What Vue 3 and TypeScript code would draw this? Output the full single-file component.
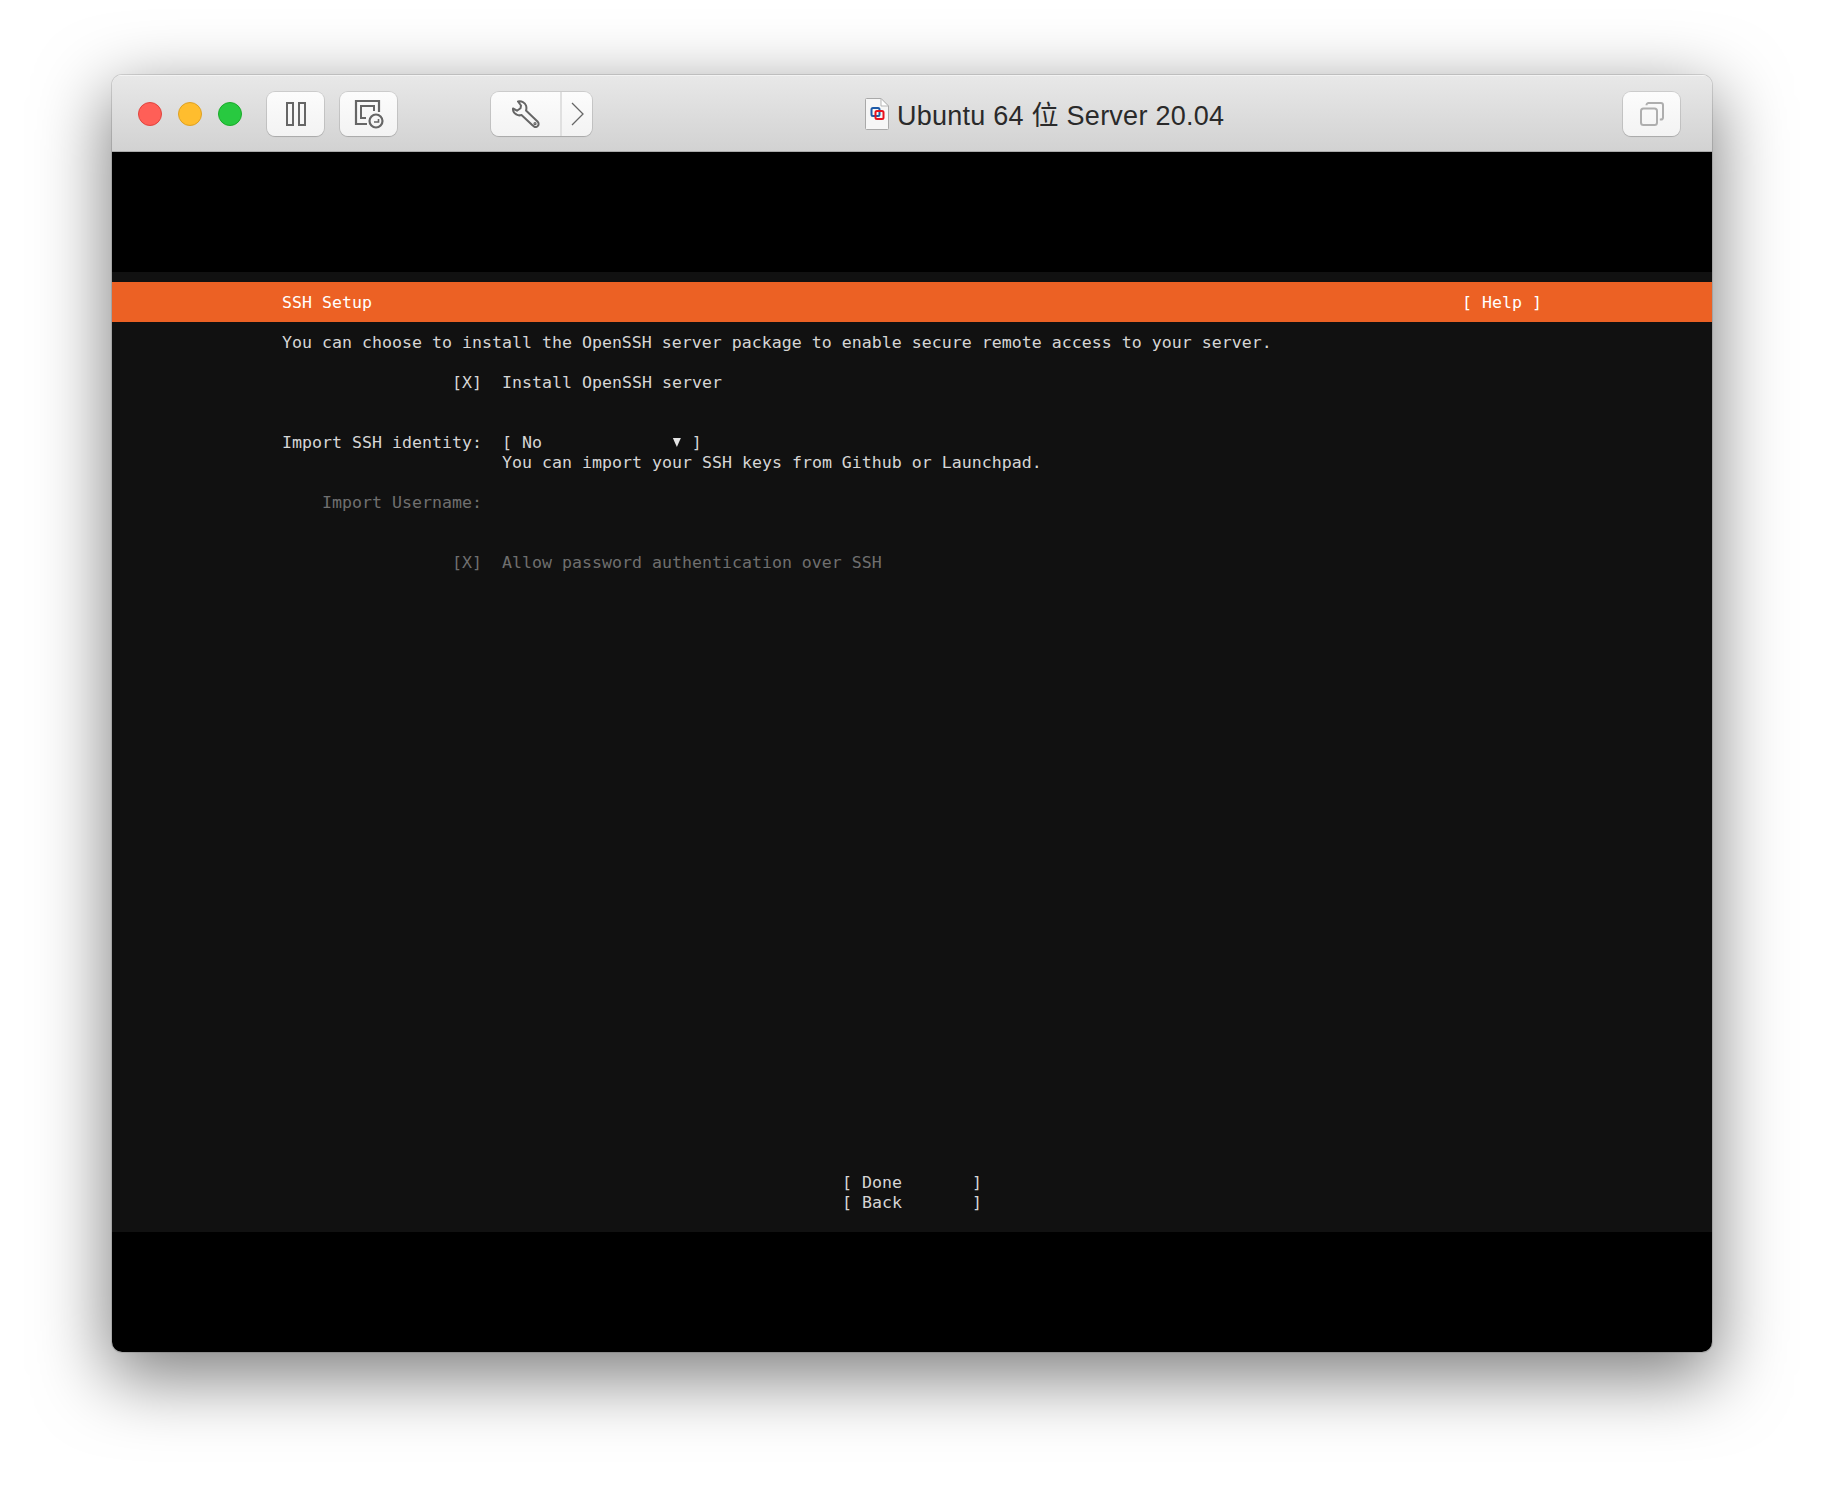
<script setup lang="ts">
const chars = (s: string, n: number): string => s.padEnd(n, ' ')
const doneLabel = chars('[ Done', 13) + ']'
const backLabel = chars('[ Back', 13) + ']'
const installLine = '[X]  Install OpenSSH server'
const allowLine = '[X]  Allow password authentication over SSH'
const identityStart = chars('Import SSH identity:', 22) + chars('[ No', 17)
const identityEnd = ' ]'
</script>

<template>
  <div class="page">
    <div class="window">
      <header class="titlebar">
        <div class="lights">
          <span class="light red"></span>
          <span class="light yellow"></span>
          <span class="light green"></span>
        </div>
        <button class="tb pause" aria-label="Pause">
          <svg width="20" height="24" viewBox="0 0 20 24" fill="none" stroke="#666" stroke-width="2">
            <rect x="1" y="1" width="6" height="22" />
            <rect x="13" y="1" width="6" height="22" />
          </svg>
        </button>
        <button class="tb snap" aria-label="Snapshot">
          <svg width="30" height="30" viewBox="0 0 30 30" fill="none" stroke="#666">
            <path d="M13 25H2V2H25V13" stroke-width="2.2" />
            <path d="M12 19H7V7H20V12" stroke-width="2" />
            <circle cx="22" cy="22" r="6.500" stroke-width="2.200" />
            <path d="M24.500 20V23H20" stroke-width="1.600" />
          </svg>
        </button>
        <div class="split">
          <button class="seg-main" aria-label="Settings">
            <svg width="28" height="28" viewBox="0 0 28 28" fill="none" stroke="#666" stroke-width="2" stroke-linejoin="round">
              <path d="M6 1.500C9.500 .7 13 2.500 14 5.500C14.700 7.500 14.500 9 14 10.500L25.500 21.500C27 23 27 25 25.500 26.200C24 27.300 22 27 21 25.700L9.500 15C8 15.500 6 15.500 4.500 14.500C2 13.300 .8 11 1 8.500L5 10.700L8.500 8.200L9 5.500z" />
              <circle cx="23" cy="23.700" r="1" stroke-width="1.200" />
            </svg>
          </button>
          <button class="seg-arrow" aria-label="More">
            <svg width="13" height="24" viewBox="0 0 13 24" fill="none" stroke="#666" stroke-width="1.300">
              <path d="M1 1L12 12L1 23" />
            </svg>
          </button>
        </div>
        <div class="title">
          <svg class="doc" width="24" height="32" viewBox="0 0 24 32">
            <path d="M.5 1.500A1 1 0 0 1 1.500.5H16L23.500 8V30.500a1 1 0 0 1-1 1H1.500a1 1 0 0 1-1-1z" fill="#f6f6f6" stroke="#a9a9a9" />
            <path d="M16 .5V8H23.500z" fill="#fff" stroke="#b5b5b5" />
            <rect x="6.500" y="10" width="8" height="8" rx="1.500" fill="none" stroke="#1d5aa8" stroke-width="2" />
            <rect x="10.500" y="13" width="8" height="8" rx="1.500" fill="none" stroke="#e8101c" stroke-width="2" />
          </svg>
          <span class="title-text">Ubuntu 64 位 Server 20.04</span>
        </div>
        <button class="tb copy" aria-label="Fullscreen">
          <svg width="24" height="24" viewBox="0 0 24 24" fill="none" stroke="#aeaeae" stroke-width="2">
            <rect x="1" y="6.500" width="16" height="16.500" rx="2.500" />
            <path d="M6.500 3.200V3.100A2.100 2.100 0 0 1 8.600 1H20.900A2.100 2.100 0 0 1 23 3.100V15.500A2.100 2.100 0 0 1 20.900 17.600H19.800" />
          </svg>
        </button>
      </header>

      <main class="screen">
        <section class="term">
          <div class="band">
            <span>SSH Setup</span>
            <span>[ Help ]</span>
          </div>
          <div class="line">You can choose to install the OpenSSH server package to enable secure remote access to your server.</div>
          <div class="line gap20 pad-17">{{ installLine }}</div>
          <div class="line gap40">{{ identityStart }}<span class="tri"></span>{{ identityEnd }}</div>
          <div class="line pad-22">You can import your SSH keys from Github or Launchpad.</div>
          <div class="line gap20 pad-4 dim">Import Username:</div>
          <div class="line gap40 pad-17 dim">{{ allowLine }}</div>
          <div class="actions">
            <div class="line">{{ doneLabel }}</div>
            <div class="line">{{ backLabel }}</div>
          </div>
        </section>
      </main>
    </div>
  </div>
</template>

<style>
html, body { margin: 0; background: #fff; }
</style>

<style scoped>
.page {
  width: 1824px;
  height: 1500px;
  box-sizing: border-box;
  padding: 75px 112px 0;
  background: #fff;
  overflow: hidden;
}
.window {
  width: 1600px;
  height: 1277px;
  border-radius: 10px;
  overflow: hidden;
  box-shadow: 0 22px 70px 4px rgba(0, 0, 0, 0.5), 0 0 0 1px rgba(0, 0, 0, 0.12);
  display: flex;
  flex-direction: column;
}
.titlebar {
  height: 77px;
  box-sizing: border-box;
  padding-left: 26px;
  padding-right: 32px;
  display: flex;
  align-items: center;
  background: linear-gradient(#e8e8e8, #d2d2d2);
  border-top: 1px solid #f3f3f3;
  border-bottom: 1px solid #ababab;
  font-family: "Liberation Sans", "Noto Sans CJK SC", sans-serif;
}
.lights {
  display: flex;
  gap: 16px;
  margin-right: 25px;
}
.light {
  width: 24px;
  height: 24px;
  border-radius: 50%;
  box-sizing: border-box;
  display: block;
}
.red { background: #ff5f57; border: 1px solid #e0443e; }
.yellow { background: #ffbd2e; border: 1px solid #dea123; }
.green { background: #28c940; border: 1px solid #1aab29; }
.tb, .split {
  height: 44px;
  border: 0;
  border-radius: 8px;
  background: linear-gradient(#fcfcfc, #f3f3f3);
  box-shadow: 0 0 0 1px rgba(0, 0, 0, 0.1), 0 1px 1px rgba(0, 0, 0, 0.12);
  padding: 0;
  display: flex;
  align-items: center;
  justify-content: center;
}
.pause { width: 57px; margin-right: 16px; }
.snap { width: 57px; margin-right: 94px; }
.split { width: 101px; overflow: hidden; }
.seg-main, .seg-arrow {
  height: 44px;
  border: 0;
  padding: 0;
  background: transparent;
  display: flex;
  align-items: center;
  justify-content: center;
}
.seg-main { width: 71px; border-right: 2px solid #e0e0e0; box-sizing: border-box; }
.seg-arrow { width: 30px; }
.title {
  display: flex;
  align-items: center;
  gap: 8px;
  margin-left: 273px;
}
.doc { display: block; }
.title-text {
  font-size: 27px;
  letter-spacing: 0.25px;
  color: #2a2a2a;
  white-space: nowrap;
}
.copy { width: 57px; margin-left: auto; }
.screen {
  flex: 1;
  background: #000;
  padding-top: 120px;
  box-sizing: border-box;
}
.term {
  height: 960px;
  box-sizing: border-box;
  padding-top: 10px;
  background: #111;
  color: #d6d6d6;
  font-family: "DejaVu Sans Mono", monospace;
  font-size: 16.6px;
  letter-spacing: 0.006px;
  display: flex;
  flex-direction: column;
}
.band {
  height: 40px;
  box-sizing: border-box;
  padding: 2px 170px 0;
  display: flex;
  align-items: center;
  justify-content: space-between;
  background: #ec6124;
  color: #fff;
  line-height: 20px;
}
.line {
  height: 20px;
  line-height: 22px;
  white-space: pre;
  padding-left: 170px;
}
.band + .line { margin-top: 10px; }
.gap20 { margin-top: 20px; }
.gap40 { margin-top: 40px; }
.pad-4 { padding-left: 210px; }
.pad-17 { padding-left: 340px; }
.pad-22 { padding-left: 390px; }
.dim { color: #6f6f6f; }
.tri {
  display: inline-block;
  width: 10px;
  height: 10px;
  vertical-align: 0;
  background: #e4e4e4;
  clip-path: polygon(10% 0, 90% 0, 50% 90%);
}
.actions {
  margin-top: auto;
  margin-bottom: 20px;
  display: flex;
  flex-direction: column;
  align-items: center;
}
.actions .line { padding-left: 0; }
</style>
